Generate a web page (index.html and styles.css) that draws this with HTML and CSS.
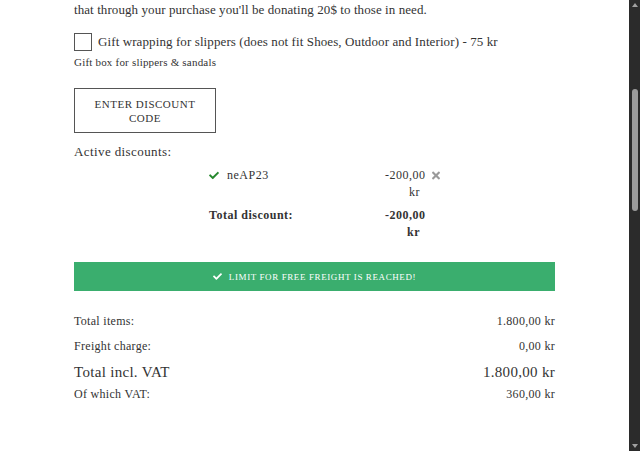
FILE: index.html
```html
<!DOCTYPE html>
<html lang="en">
  <head>
    <meta charset="UTF-8" />
    <title>Cart summary</title>
    <link rel="stylesheet" href="styles.css">
  </head>
  <body>
    <div class="page">
      <main class="cart">
        <!-- Charity note -->
        <p class="charity">
          Every pair of slippers supports our yearly charity project, so we can say<br />
          that through your purchase you'll be donating 20$ to those in need.
        </p>

        <!-- Gift wrapping -->
        <label class="gift">
          <span class="box"></span>
          <span>Gift wrapping for slippers (does not fit Shoes, Outdoor and Interior) - 75 kr</span>
        </label>
        <div class="gift-note">Gift box for slippers &amp; sandals</div>

        <button class="discount-btn">ENTER DISCOUNT<br />CODE</button>

        <!-- Discounts -->
        <div class="active-label">Active discounts:</div>
        <div class="discounts">
          <div class="code">
            <svg class="ok" viewBox="0 0 512 512"><path d="M173.9 439.4l-166.4-166.4c-10-10-10-26.2 0-36.2l36.2-36.2c10-10 26.2-10 36.2 0L192 312.7 432.1 72.6c10-10 26.2-10 36.2 0l36.2 36.2c10 10 10 26.2 0 36.2l-294.4 294.4c-10 10-26.2 10-36.2 0z"/></svg>
            neAP23
          </div>
          <div class="amount">-200,00 kr</div>
          <div class="remove">
            <svg viewBox="0 0 352 512"><path d="M242.7 256l100.1-100.1c12.3-12.3 12.3-32.2 0-44.5l-22.2-22.2c-12.3-12.3-32.2-12.3-44.5 0L176 189.3 75.9 89.2c-12.3-12.3-32.2-12.3-44.5 0L9.2 111.5c-12.3 12.3-12.3 32.2 0 44.5L109.3 256 9.2 356.1c-12.3 12.3-12.3 32.2 0 44.5l22.2 22.2c12.3 12.3 32.2 12.3 44.5 0L176 322.7l100.1 100.1c12.3 12.3 32.2 12.3 44.5 0l22.2-22.2c12.3-12.3 12.3-32.2 0-44.5L242.7 256z"/></svg>
          </div>
          <div class="code bold">Total discount:</div>
          <div class="amount bold">-200,00 kr</div>
          <div></div>
        </div>

        <!-- Free freight -->
        <div class="freight">
          <svg viewBox="0 0 512 512"><path d="M173.9 439.4l-166.4-166.4c-10-10-10-26.2 0-36.2l36.2-36.2c10-10 26.2-10 36.2 0L192 312.7 432.1 72.6c10-10 26.2-10 36.2 0l36.2 36.2c10 10 10 26.2 0 36.2l-294.4 294.4c-10 10-26.2 10-36.2 0z"/></svg>
          LIMIT FOR FREE FREIGHT IS REACHED!
        </div>

        <!-- Totals -->
        <div class="totals">
          <div class="row"><span>Total items:</span><span>1.800,00 kr</span></div>
          <div class="row"><span>Freight charge:</span><span>0,00 kr</span></div>
          <div class="row big"><span>Total incl. VAT</span><span>1.800,00 kr</span></div>
          <div class="row vat"><span>Of which VAT:</span><span>360,00 kr</span></div>
        </div>
      </main>

      <!-- Window scrollbar -->
      <div class="scrollbar">
        <span class="arrow up"></span>
        <span class="thumb"></span>
        <span class="arrow down"></span>
      </div>
    </div>
  </body>
</html>
```

FILE: styles.css
```css
html,
body {
  margin: 0;
  height: 100%;
  overflow: hidden;
}
body {
  font-family: 'Liberation Serif', 'Times New Roman', serif;
  background: #fff;
  color: #333;
}
.page {
  display: flex;
  height: 451px;
}
.cart {
  flex: 1;
  padding-left: 74px;
  padding-right: 74px;
  margin-top: -17px;
}
.charity {
  margin: 0;
  font-size: 13px;
  line-height: 18px;
  letter-spacing: 0.08px;
}
.gift {
  display: flex;
  align-items: center;
  gap: 6px;
  margin-top: 14px;
  font-size: 13px;
  letter-spacing: 0.1px;
}
.box {
  width: 16px;
  height: 16px;
  border: 1px solid #555;
}
.gift-note {
  margin-top: 5px;
  font-size: 11px;
  letter-spacing: 0.2px;
}
.discount-btn {
  display: block;
  width: 142px;
  height: 45px;
  margin-top: 20px;
  background: #fff;
  border: 1px solid #555;
  font-family: inherit;
  font-size: 11px;
  line-height: 14px;
  letter-spacing: 0.5px;
  color: #333;
  padding: 0 8px;
}
.active-label {
  margin-top: 11px;
  font-size: 13px;
  letter-spacing: 0.4px;
}
.discounts {
  display: grid;
  grid-template-columns: 176px 35px 22px;
  margin: 7px 0 0 135px;
  font-size: 12px;
  line-height: 17px;
  letter-spacing: 0.5px;
  row-gap: 6px;
}
.code {
  display: flex;
  align-items: flex-start;
  gap: 8px;
}
.ok {
  width: 10px;
  height: 17px;
  fill: #27892e;
}
.amount {
  text-align: right;
}
.remove {
  padding-left: 12px;
}
.remove svg {
  width: 8px;
  height: 17px;
  fill: #9a9a9a;
}
.bold {
  font-weight: bold;
}
.freight {
  display: flex;
  justify-content: center;
  align-items: center;
  gap: 7px;
  height: 29px;
  margin-top: 21px;
  background: #3aae6e;
  color: #fff;
  font-size: 9px;
  letter-spacing: 0.6px;
}
.freight svg {
  width: 9px;
  height: 9px;
  fill: #fff;
}
.totals {
  margin-top: 22px;
  font-size: 12px;
  letter-spacing: 0.3px;
}
.row {
  display: flex;
  justify-content: space-between;
  line-height: 17px;
  margin-bottom: 8px;
}
.big {
  font-size: 15px;
  padding-top: 1px;
  margin-bottom: 5px;
}
.scrollbar {
  width: 11px;
  background: #2b2b2b;
  display: flex;
  flex-direction: column;
  align-items: center;
}
.arrow {
  width: 0;
  height: 0;
  border-left: 3px solid transparent;
  border-right: 3px solid transparent;
}
.up {
  margin-top: 3px;
  border-bottom: 4px solid #a0a0a0;
}
.down {
  margin-top: auto;
  margin-bottom: 3px;
  border-top: 4px solid #a0a0a0;
}
.thumb {
  width: 6px;
  height: 122px;
  margin-top: 82px;
  border-radius: 3px;
  background: #9c9c9c;
}
```
